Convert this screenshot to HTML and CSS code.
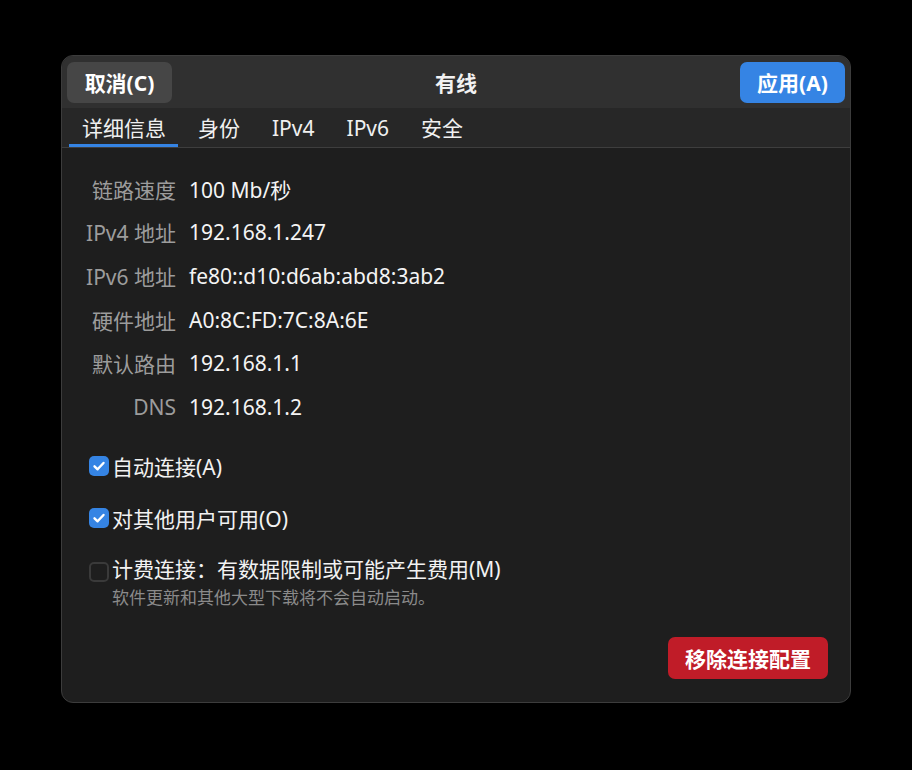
FILE: index.html
```html
<!DOCTYPE html>
<html lang="zh-CN">
<head>
<meta charset="utf-8">
<title>有线</title>
<link rel="stylesheet" href="styles.css">
</head>
<body>
<div class="window">
  <header class="headerbar">
    <button class="btn btn-cancel">取消(C)</button>
    <div class="title">有线</div>
    <button class="btn btn-apply">应用(A)</button>
  </header>
  <nav class="tabs">
    <div class="tab active">详细信息</div>
    <div class="tab">身份</div>
    <div class="tab">IPv4</div>
    <div class="tab">IPv6</div>
    <div class="tab">安全</div>
  </nav>
  <main class="content">
    <div class="details">
      <div class="label">链路速度</div><div class="value">100 Mb/秒</div>
      <div class="label">IPv4 地址</div><div class="value">192.168.1.247</div>
      <div class="label">IPv6 地址</div><div class="value">fe80::d10:d6ab:abd8:3ab2</div>
      <div class="label">硬件地址</div><div class="value">A0:8C:FD:7C:8A:6E</div>
      <div class="label">默认路由</div><div class="value">192.168.1.1</div>
      <div class="label">DNS</div><div class="value">192.168.1.2</div>
    </div>
    <div class="checks">
      <div class="check">
        <span class="box checked"><svg viewBox="0 0 20 20" width="20" height="20"><path d="M5.5 10.3 L8.6 13.3 L14.5 7" fill="none" stroke="#fff" stroke-width="2.4" stroke-linecap="round" stroke-linejoin="round"/></svg></span>
        <span class="check-text">自动连接(A)</span>
      </div>
      <div class="check">
        <span class="box checked"><svg viewBox="0 0 20 20" width="20" height="20"><path d="M5.5 10.3 L8.6 13.3 L14.5 7" fill="none" stroke="#fff" stroke-width="2.4" stroke-linecap="round" stroke-linejoin="round"/></svg></span>
        <span class="check-text">对其他用户可用(O)</span>
      </div>
      <div class="check check-metered">
        <span class="box"></span>
        <div class="check-multi">
          <span class="check-text">计费连接：有数据限制或可能产生费用(M)</span>
          <span class="check-sub">软件更新和其他大型下载将不会自动启动。</span>
        </div>
      </div>
    </div>
    <div class="actions">
      <button class="btn btn-remove">移除连接配置</button>
    </div>
  </main>
</div>
</body>
</html>
```

FILE: styles.css
```css
* { box-sizing: border-box; }
html, body {
  margin: 0;
  padding: 0;
  background: #000;
  width: 912px;
  height: 770px;
  font-family: "Noto Sans", "Noto Sans CJK SC", sans-serif;
  color: #f2f2f2;
}
body { padding: 55px 0 0 61px; }
.window {
  width: 790px;
  height: 648px;
  background: #1e1e1e;
  border: 1px solid #3c3c3c;
  border-radius: 12px;
  overflow: hidden;
  display: flex;
  flex-direction: column;
}
.headerbar {
  height: 52px;
  background: #303030;
  display: flex;
  align-items: center;
  justify-content: space-between;
  padding: 0 5px 0 5px;
  position: relative;
}
.title {
  position: absolute;
  left: 0;
  right: 0;
  text-align: center;
  font-weight: 700;
  font-size: 21px;
  pointer-events: none;
}
.btn {
  font-family: inherit;
  border: none;
  border-radius: 7px;
  font-weight: 700;
  font-size: 21px;
  color: #fff;
  padding: 0;
}
.btn-cancel, .btn-apply {
  width: 105px;
  height: 41px;
}
.btn-cancel { background: #464646; }
.btn-apply { background: #3584e4; }
.tabs {
  height: 40px;
  background: #272727;
  border-bottom: 1px solid #3e3e3e;
  display: flex;
  padding-left: 7px;
}
.tab {
  height: 39px;
  line-height: 40px;
  font-size: 21px;
  padding: 0 12px;
  margin-right: 8px;
  color: #f0f0f0;
}
.tab.active {
  border-bottom: 3px solid #3584e4;
  padding: 0 12px 0 13px;
  margin-right: 8px;
}
.content {
  flex: 1;
  display: flex;
  flex-direction: column;
}
.details {
  display: grid;
  grid-template-columns: 114px auto;
  column-gap: 13px;
  grid-auto-rows: 43.6px;
  align-items: center;
  padding-top: 19px;
  font-size: 21px;
}
.label {
  text-align: right;
  color: #9c9c9c;
}
.value { color: #f4f4f4; }
.checks {
  display: flex;
  flex-direction: column;
  padding: 15px 0 0 27px;
}
.check {
  display: flex;
  align-items: center;
  height: 44px;
  margin-bottom: 8px;
}
.box {
  width: 20px;
  height: 20px;
  border-radius: 5px;
  border: 2px solid #3a3a3a;
  margin-right: 3px;
  flex: none;
  display: flex;
}
.box.checked {
  background: #3584e4;
  border: none;
}
.check-text { font-size: 21px; color: #f2f2f2; }
.check-metered {
  height: auto;
  align-items: flex-start;
  margin-top: 5px;
  margin-bottom: 0;
}
.check-metered .box { margin-top: 9px; }
.check-multi {
  display: flex;
  flex-direction: column;
}
.check-multi .check-text { line-height: 32px; }
.check-sub {
  font-size: 17px;
  color: #8a8a8a;
  line-height: 26px;
}
.actions {
  display: flex;
  justify-content: flex-end;
  padding: 26px 22px 0 0;
}
.btn-remove {
  width: 160px;
  height: 42px;
  background: #c01c28;
}
```
